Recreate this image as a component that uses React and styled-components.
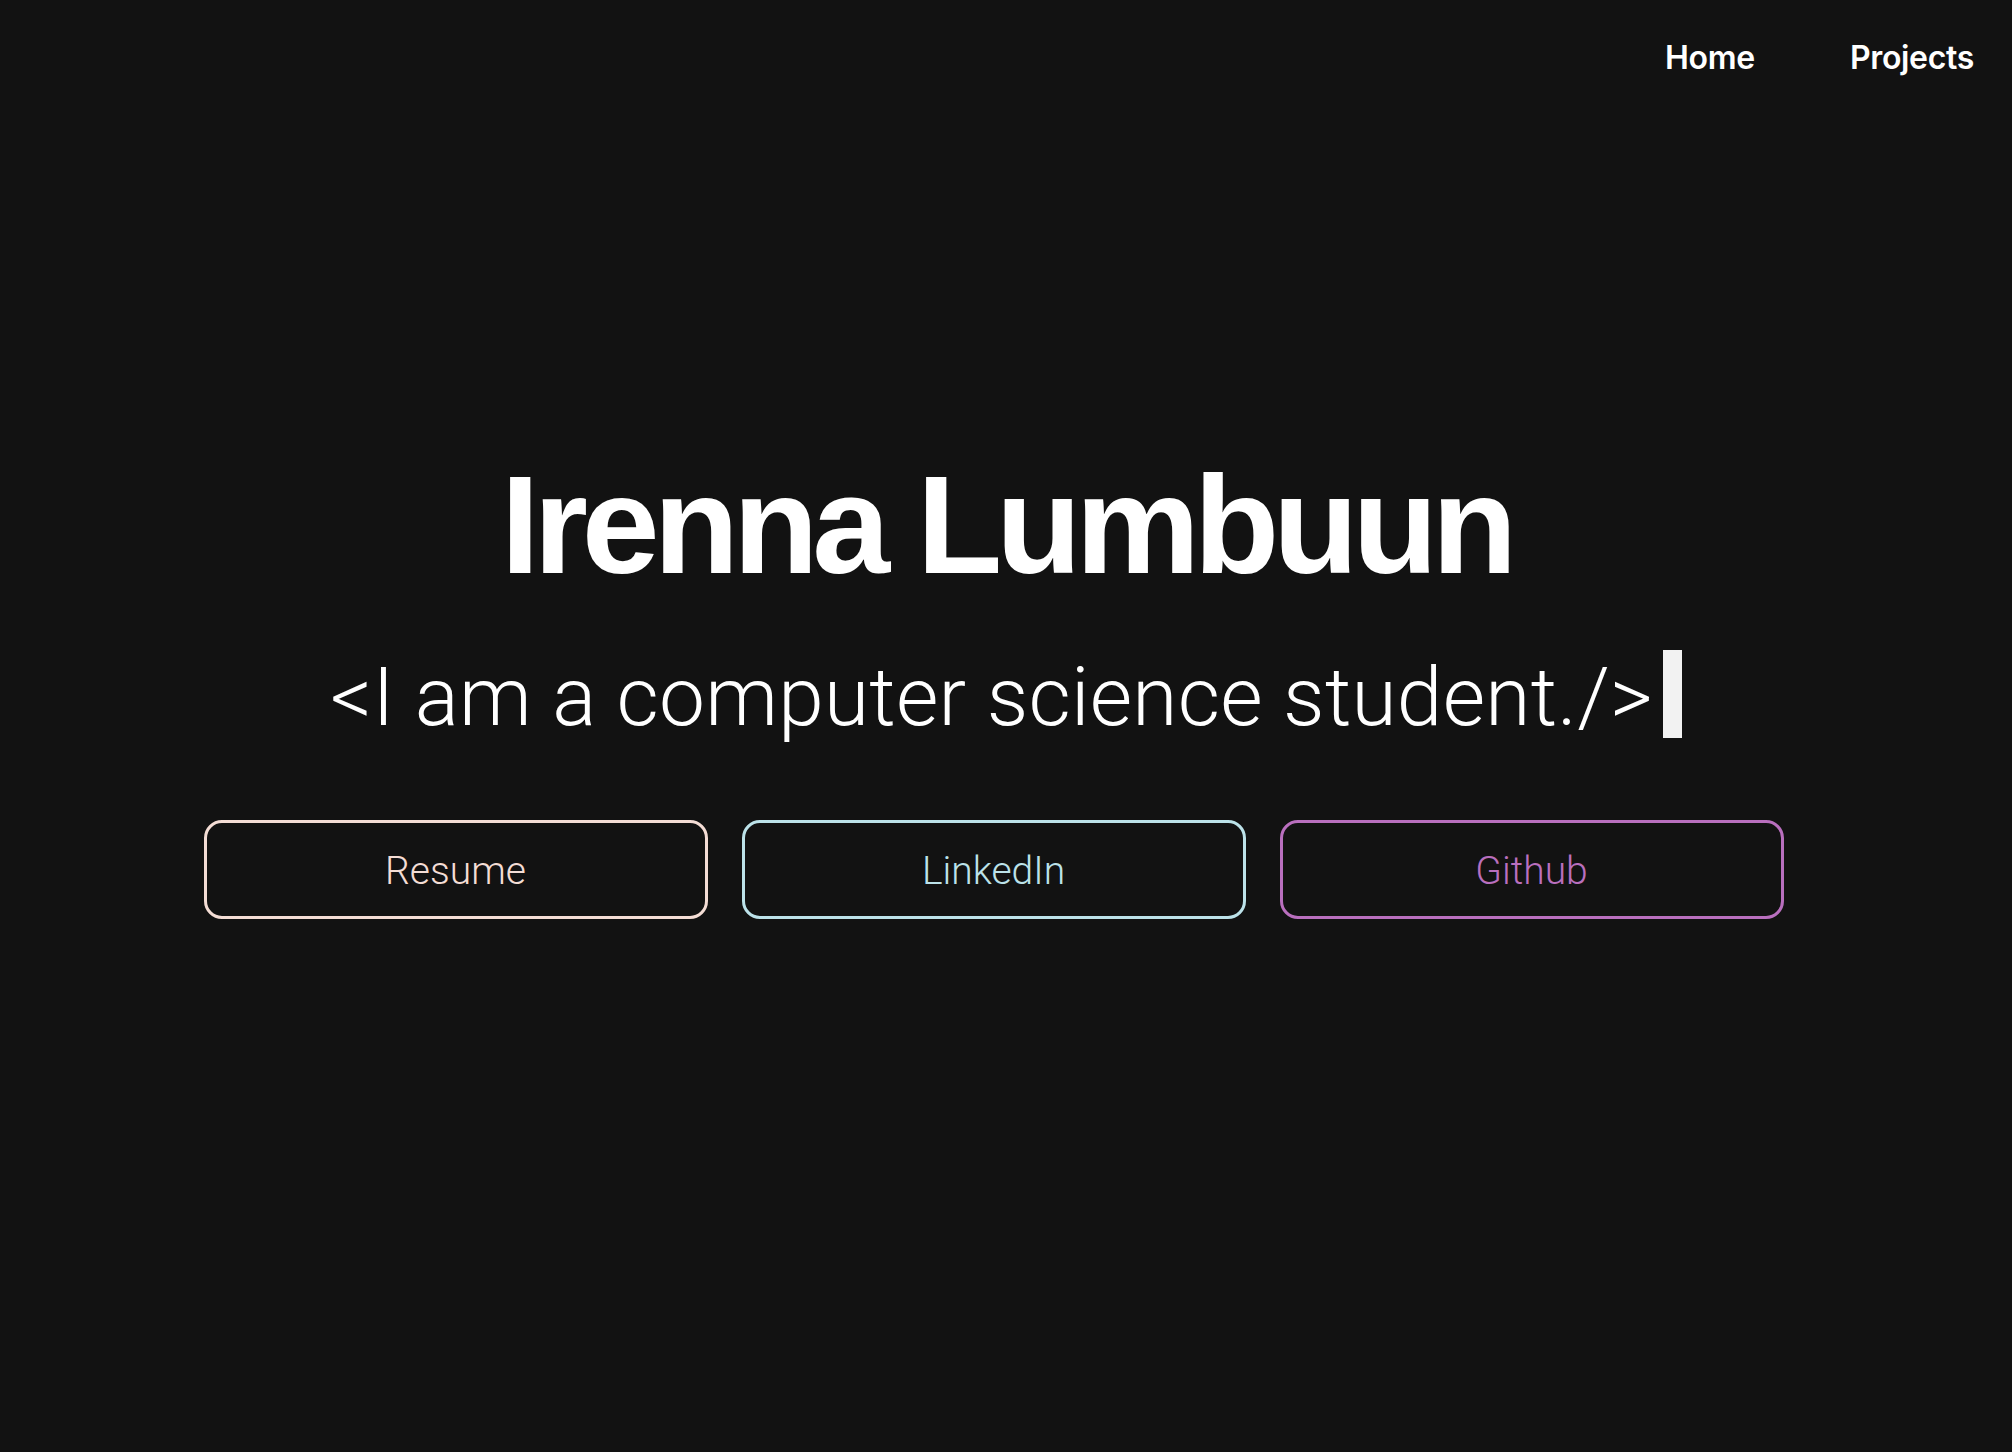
import React from "react";
import styled, { createGlobalStyle } from "styled-components";

const Global = createGlobalStyle`
  html, body { margin: 0; padding: 0; background: #121212; }
  body { min-height: 1452px; font-family: "Inter", "Liberation Sans", sans-serif; color: #fff; }
  * { box-sizing: border-box; }
`;

const Page = styled.div`
  min-height: 1452px;
  background: #121212;
  display: flex;
  flex-direction: column;
`;

const Nav = styled.nav`
  display: flex;
  justify-content: flex-end;
  gap: 95px;
  padding: 42px 38px 0 0;
`;

const NavLink = styled.a`
  font-family: "Inter", "Liberation Sans", sans-serif;
  font-weight: 600;
  font-size: 32px;
  line-height: 1;
  color: #ffffff;
  text-decoration: none;
  letter-spacing: -0.01em;
`;

const Hero = styled.main`
  display: flex;
  flex-direction: column;
  align-items: center;
  margin-top: 381px;
`;

const Title = styled.h1`
  margin: 0;
  font-family: "Liberation Sans", "Arial", sans-serif;
  font-weight: 700;
  font-size: 140px;
  line-height: 1;
  letter-spacing: -0.044em;
  color: #ffffff;
`;

const Subtitle = styled.div`
  display: flex;
  align-items: flex-end;
  margin-top: 55px;
  gap: 10px;
`;

const SubText = styled.span`
  font-family: "Roboto", "Liberation Sans", sans-serif;
  font-weight: 300;
  font-size: 82px;
  line-height: 1;
  letter-spacing: 0.25px;
  color: #ffffff;
`;

const Cursor = styled.span`
  display: block;
  width: 19px;
  height: 88px;
  background: #f2f2f2;
`;

const ButtonRow = styled.div`
  display: flex;
  gap: 34px;
  margin-top: 82px;
  margin-right: 25px;
`;

const LinkButton = styled.a`
  display: flex;
  align-items: center;
  justify-content: center;
  width: 504px;
  height: 99px;
  border: 3px solid ${(p) => p.$color};
  border-radius: 18px;
  color: ${(p) => p.$color};
  font-family: "Roboto", "Inter", sans-serif;
  font-weight: 300;
  font-size: 39px;
  text-decoration: none;
  background: transparent;
  padding-top: 2px;
`;

export default function App() {
  return (
    <Page>
      <Global />
      <Nav>
        <NavLink href="#">Home</NavLink>
        <NavLink href="#">Projects</NavLink>
      </Nav>
      <Hero>
        <Title>Irenna Lumbuun</Title>
        <Subtitle>
          <SubText>{"<I am a computer science student./>"}</SubText>
          <Cursor />
        </Subtitle>
        <ButtonRow>
          <LinkButton href="#" $color="#f4ddd5">Resume</LinkButton>
          <LinkButton href="#" $color="#bce2e9">LinkedIn</LinkButton>
          <LinkButton href="#" $color="#b96fbe">Github</LinkButton>
        </ButtonRow>
      </Hero>
    </Page>
  );
}
